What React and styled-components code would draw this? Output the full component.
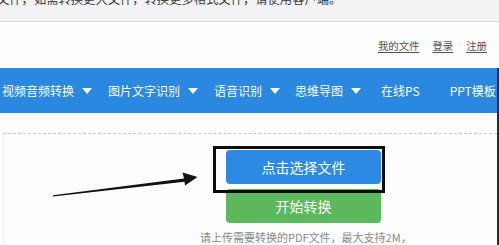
import React from 'react';
import styled, { createGlobalStyle } from 'styled-components';

// 上传页截图：顶部提示条、链接、蓝色导航、上传按钮 + 标注框和箭头

const GlobalStyle = createGlobalStyle`
    html, body {
        margin: 0;
        padding: 0;
        background: #fdfdfd;
    }
    body {
        font-family: "Noto Sans CJK SC", "Noto Sans", sans-serif;
    }
`;

const Page = styled.div`
    position: relative;
    width: 499px;
    height: 245px;
    overflow: hidden;
    background: #fdfdfd;
`;

const Notice = styled.div`
    height: 21px;
    background: #f3f3f5;
    border-bottom: 1px solid #d9d9dc;
    overflow: hidden;
    .Noticetext{
        margin: -8px 0 0 -3px;
        font-size: 12.3px;
        line-height: 14px;
        color: #3a3a3a;
        white-space: nowrap;
    }
`;

const Header = styled.div`
    height: 46px;
    display: flex;
    justify-content: flex-end;
    align-items: center;
    gap: 13px;
    padding-right: 12px;
    padding-top: 0px;
    background: #fdfdfd;
`;

const HeadLink = styled.a`
    font-size: 10.4px;
    color: #555;
    text-decoration: underline;
    text-underline-offset: 2px;
    cursor: pointer;
`;

const Main = styled.div`
    border-right: 2px solid #2b2b2b;
    height: 177px;
    background: #fdfdfd;
`;

const Nav = styled.nav`
    height: 45px;
    background: #2b88e1;
    display: flex;
    align-items: center;
    padding-left: 2px;
    overflow: hidden;
    white-space: nowrap;
`;

const NavItem = styled.div`
    display: flex;
    align-items: center;
    flex-shrink: 0;
    margin-right: ${props => props.$gap}px;
    font-size: 12px;
    color: #fff;
    .Navarrow{
        width: 0;
        height: 0;
        margin-left: 8px;
        border-left: 5px solid transparent;
        border-right: 5px solid transparent;
        border-top: 6px solid #fff;
    }
`;

const Gap = styled.div`
    height: 20px;
`;

const Panel = styled.div`
    margin-left: 3px;
    height: 112px;
    border-top: 1px dashed #cfcfcf;
    border-left: 1px solid #ededed;
    padding-top: 16px;
    box-sizing: border-box;
`;

const ButtonColumn = styled.div`
    display: flex;
    flex-direction: column;
    gap: 5px;
    margin-left: 222px;
    width: 155px;
`;

const Button = styled.div`
    height: 34px;
    border-radius: 4px;
    background: ${props => props.$color};
    color: #fff;
    font-size: 14px;
    display: flex;
    align-items: center;
    justify-content: center;
    cursor: pointer;
`;

const Hint = styled.p`
    margin: 6px 0 0 196px;
    font-size: 11px;
    color: #8a8a8a;
    white-space: nowrap;
`;

const MarkBox = styled.div`
    position: absolute;
    left: 213px;
    top: 146px;
    width: 166px;
    height: 41px;
    border: 3px solid #0c0c0c;
`;

const Overlay = styled.svg`
    position: absolute;
    left: 0;
    top: 0;
    pointer-events: none;
`;

const navItems = [
    { label: '视频音频转换', arrow: true, gap: 16 },
    { label: '图片文字识别', arrow: true, gap: 16 },
    { label: '语音识别', arrow: true, gap: 15 },
    { label: '思维导图', arrow: true, gap: 20 },
    { label: '在线PS', arrow: false, gap: 30 },
    { label: 'PPT模板', arrow: false, gap: 0 },
];

function App() {
    return (
        <Page>
            <GlobalStyle />
            <Notice>
                <div className="Noticetext">文件，如需转换更大文件，转换更多格式文件，请使用客户端。</div>
            </Notice>
            <Header>
                <HeadLink>我的文件</HeadLink>
                <HeadLink>登录</HeadLink>
                <HeadLink>注册</HeadLink>
            </Header>
            <Main>
                <Nav>
                    {navItems.map(item => (
                        <NavItem key={item.label} $gap={item.gap}>
                            {item.label}
                            {item.arrow && <span className="Navarrow" />}
                        </NavItem>
                    ))}
                </Nav>
                <Gap />
                <Panel>
                    <ButtonColumn>
                        <Button $color="#2d8ae4">点击选择文件</Button>
                        <Button $color="#5cb85c">开始转换</Button>
                    </ButtonColumn>
                    <Hint>请上传需要转换的PDF文件，最大支持2M，</Hint>
                </Panel>
            </Main>
            <MarkBox />
            <Overlay width="499" height="245" viewBox="0 0 499 245">
                <polygon
                    points="53,195.3 184,178.6 182.5,172.5 197.5,177 185,185.5 184.5,181.8 53,196.6"
                    fill="#111"
                />
            </Overlay>
        </Page>
    );
}

export default App;
